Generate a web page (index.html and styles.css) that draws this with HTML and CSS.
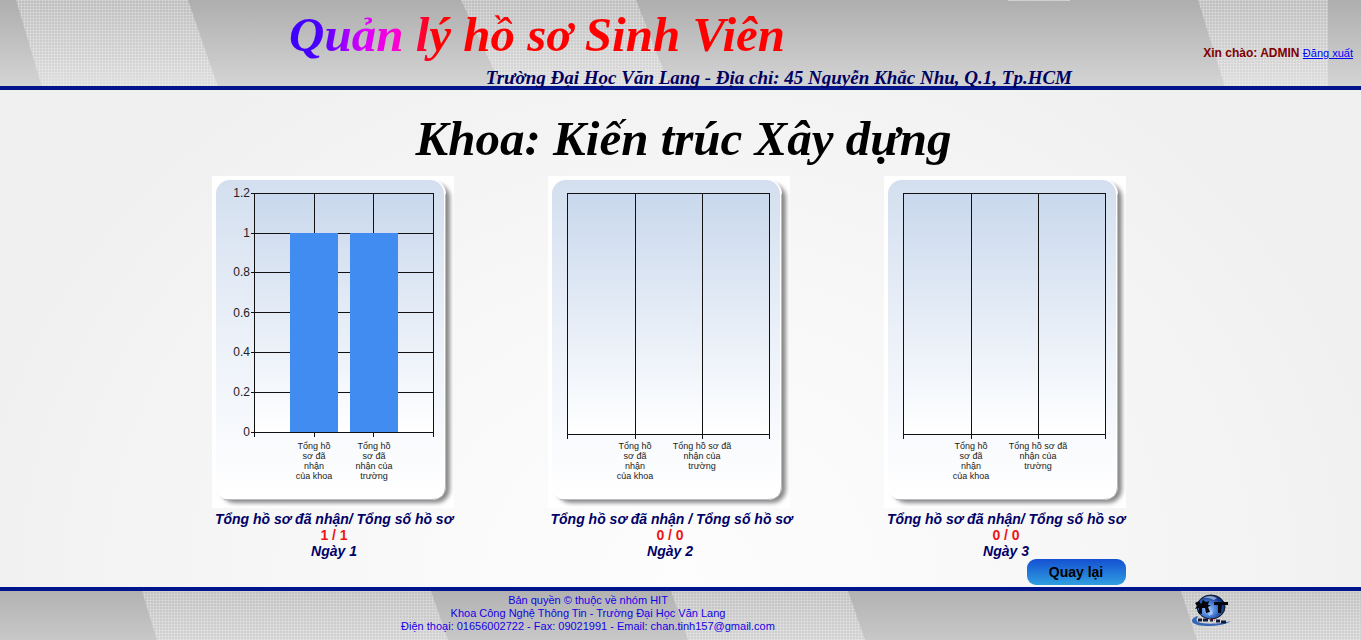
FILE: index.html
```html
<!DOCTYPE html>
<html lang="vi">
<head>
<meta charset="utf-8">
<meta name="viewport" content="width=device-width, initial-scale=1">
<title>Quản lý hồ sơ Sinh Viên</title>
<link rel="stylesheet" href="styles.css">
</head>
<body>
<header class="site-header">
  <svg class="stripes" aria-hidden="true">
    <defs>
      <pattern id="mesh" width="3" height="3" patternUnits="userSpaceOnUse">
        <rect width="3" height="3" fill="#fff" fill-opacity=".2"/>
        <path d="M0 .5H3M.5 0V3" stroke="#fff" stroke-opacity=".22"/>
      </pattern>
    </defs>
    <path fill="url(#mesh)" d="M16 0H188L218 87H42ZM461 0H636L670 87H502ZM1198 0H1328V87H1225ZM1008 0H1070V1H1008Z"/>
  </svg>
  <div class="brand">
    <p class="brand-title">Quản lý hồ sơ Sinh Viên</p>
    <p class="brand-address">Trường Đại Học Văn Lang - Địa chỉ: 45 Nguyễn Khắc Nhu, Q.1, Tp.HCM</p>
  </div>
  <div class="user"><strong>Xin chào: ADMIN</strong> <a href="#">Đăng xuất</a></div>
</header>

<main class="page">
  <h1 class="faculty">Khoa: Kiến trúc Xây dựng</h1>
  <div class="report">
    <div class="charts">
      <figure class="day">
        <svg class="chart" viewBox="0 0 242 332" role="img" aria-label="Ngày 1">
          <defs>
            <linearGradient id="panel" x1="0" y1="0" x2="0" y2="1">
              <stop offset="0" stop-color="#d3dfef"/><stop offset=".5" stop-color="#ecf1f9"/><stop offset="1" stop-color="#fff"/>
            </linearGradient>
            <linearGradient id="plot" x1="0" y1="0" x2="0" y2="1">
              <stop offset="0" stop-color="#c9d8ed"/><stop offset="1" stop-color="#fff"/>
            </linearGradient>
            <filter id="soft" x="-10%" y="-10%" width="120%" height="120%"><feGaussianBlur stdDeviation="2"/></filter>
            <g id="frame">
              <rect width="242" height="332" fill="#fff"/>
              <rect x="9" y="8" width="229" height="319" rx="14" fill="#888" filter="url(#soft)"/>
              <rect x="4" y="4" width="230" height="320" rx="14" fill="#fff"/>
              <path d="M233.500 18V310Q233.500 323.500 220 323.500H12" fill="none" stroke="#b8bcc2"/>
              <rect x="4" y="4" width="228" height="318" rx="14" fill="url(#panel)"/>
            </g>
            <g id="empty-chart">
              <use href="#frame"/>
              <rect x="19" y="17" width="203" height="241" fill="url(#plot)"/>
              <path class="grid" d="M19 17.5H222M19 258.5H222M19.5 17V263M87.5 17V263M154.5 17V263M221.5 17V263"/>
              <g class="category">
                <text x="87" y="273">Tổng hồ</text><text x="87" y="283">sơ đã</text><text x="87" y="293">nhận</text><text x="87" y="303">của khoa</text>
                <text x="154" y="273">Tổng hồ sơ đã</text><text x="154" y="283">nhận của</text><text x="154" y="293">trường</text>
              </g>
            </g>
          </defs>
          <use href="#frame"/>
          <rect x="42" y="17" width="180" height="240" fill="url(#plot)"/>
          <path class="grid" d="M39 17.5H222M39 57.5H222M39 96.5H222M39 136.5H222M39 176.5H222M39 216.5H222M39 256.5H222M42.5 17V261M102.5 17V261M161.5 17V261M221.5 17V261"/>
          <path fill="#418cf0" d="M78 57H126V256H78ZM138 57H186V256H138Z"/>
          <g class="value">
            <text x="38" y="21">1.2</text><text x="38" y="61">1</text><text x="38" y="100">0.8</text><text x="38" y="141">0.6</text><text x="38" y="180">0.4</text><text x="38" y="220">0.2</text><text x="38" y="260">0</text>
          </g>
          <g class="category">
            <text x="102" y="273">Tổng hồ</text><text x="102" y="283">sơ đã</text><text x="102" y="293">nhận</text><text x="102" y="303">của khoa</text>
            <text x="162" y="273">Tổng hồ</text><text x="162" y="283">sơ đã</text><text x="162" y="293">nhận của</text><text x="162" y="303">trường</text>
          </g>
        </svg>
        <figcaption class="caption">Tổng hồ sơ đã nhận/ Tổng số hồ sơ<span class="count">1 / 1</span>Ngày 1</figcaption>
      </figure>
      <figure class="day">
        <svg class="chart" viewBox="0 0 242 332" role="img" aria-label="Ngày 2"><use href="#empty-chart"/></svg>
        <figcaption class="caption">Tổng hồ sơ đã nhận / Tổng số hồ sơ<span class="count">0 / 0</span>Ngày 2</figcaption>
      </figure>
      <figure class="day">
        <svg class="chart" viewBox="0 0 242 332" role="img" aria-label="Ngày 3"><use href="#empty-chart"/></svg>
        <figcaption class="caption">Tổng hồ sơ đã nhận/ Tổng số hồ sơ<span class="count">0 / 0</span>Ngày 3</figcaption>
      </figure>
    </div>
    <button class="back" type="button">Quay lại</button>
  </div>
</main>

<footer class="site-footer">
  <svg class="stripes" aria-hidden="true">
    <path fill="url(#mesh)" d="M142 0H431L448 49H157ZM671 0H848L865 49H688ZM1181 0H1361V49H1197Z"/>
  </svg>
  <p class="contact">Bản quyền © thuộc về nhóm HIT<br>Khoa Công Nghệ Thông Tin - Trường Đại Học Văn Lang<br>Điện thoại: 01656002722 - Fax: 09021991 - Email: chan.tinh157@gmail.com</p>
  <svg class="logo" viewBox="0 0 42 34" role="img" aria-label="HIT">
    <defs>
      <radialGradient id="globe" cx=".4" cy=".6" r=".6">
        <stop offset="0" stop-color="#a9cbfa"/><stop offset=".45" stop-color="#4b82dc"/><stop offset="1" stop-color="#0b2875"/>
      </radialGradient>
    </defs>
    <path d="M7 22C-2 26 1 32 17 32C28 32 37 30 41 27C32 30 10 31 7 27C6 25 7 24 8 23Z" fill="#3767b4"/>
    <ellipse cx="21" cy="13" rx="14" ry="12" fill="url(#globe)" stroke="#101820"/>
    <path d="M13 4Q20 0 27 4L24 6Q18 3 13 4ZM18 18L22 16L23 20L19 22Z" fill="#cfe2ff" opacity=".6"/>
    <path d="M5 9L9 7L11 10L13 6L16 8L19 7L18 11L21 11L18 13L20 18L16 19L15 14L12 14L12 20L8 19L9 14L5 15L7 12ZM24 8H38V11H32L31 19H28V11H24Z" fill="#05070c"/>
    <path d="M8 26H12M13 26H18M20 26H23M26 27H30M31 28H36" stroke="#151b36" stroke-width="3"/>
    <path d="M19 25H21M24 26H25" stroke="#e13b3b" stroke-width="1"/>
  </svg>
</footer>
</body>
</html>
```
FILE: styles.css
```css
* { box-sizing: border-box; }

body {
  display: flex;
  flex-direction: column;
  min-height: 100vh;
  margin: 0;
  font-family: "Liberation Sans", Arial, sans-serif;
  background: radial-gradient(ellipse at 50% 90%, #fdfdfd 0, #f8f8f8 35%, #f0f0f0 75%);
}

p, h1, figure { margin: 0; }

.stripes {
  position: absolute;
  inset: 0;
  z-index: -1;
  width: 100%;
  height: 100%;
}

.site-header {
  position: relative;
  z-index: 0;
  display: grid;
  grid-template-columns: 1fr minmax(0, 783px) 1fr;
  border-bottom: 4px solid #00148c;
  background: linear-gradient(#aeaeae, #d4d4d4);
}

.brand { grid-column: 2; }

.brand-title {
  width: max-content;
  font: italic bold 49px/70px "Liberation Serif", "Times New Roman", serif;
  color: transparent;
  background: linear-gradient(90deg, #3d00ff 0, #4a00ff 6%, #d800ff 15%, #ff00d0 22%, #ff0040 26%, #f00 30%);
  background-clip: text;
  -webkit-background-clip: text;
}

.brand-address {
  text-align: right;
  font: italic bold 19px/16px "Liberation Serif", "Times New Roman", serif;
  white-space: nowrap;
  color: #000060;
}

.user {
  justify-self: end;
  align-self: center;
  padding: 20px 8px 0 0;
  font-size: 12px;
  line-height: 16px;
  white-space: nowrap;
}

.user strong { color: #800000; }
.user a { font-size: 11px; color: #00f; }

.page { flex: 1; }

.faculty {
  padding: 12px 0 0 6px;
  text-align: center;
  font: italic bold 49px/74px "Liberation Serif", "Times New Roman", serif;
  color: #000;
}

.report {
  display: flex;
  flex-direction: column;
  width: fit-content;
  margin: 0 auto;
  padding-right: 24px;
}

.charts { display: flex; gap: 94px; }

.day { width: 242px; }

.chart { display: block; width: 100%; height: auto; }

.grid { fill: none; stroke: #111; }

.value { font-size: 12px; text-anchor: end; fill: #222; }

.category { font-size: 9px; text-anchor: middle; fill: #222; }

.caption {
  padding: 3px 0 0 3px;
  text-align: center;
  font: italic bold 14px/16px "Liberation Sans", Arial, sans-serif;
  white-space: nowrap;
  color: #000066;
}

.count { display: block; font-style: normal; color: #f01414; }

.back {
  align-self: flex-end;
  width: 99px;
  height: 26px;
  margin-bottom: 2px;
  padding: 0;
  border: 0;
  border-radius: 9px;
  font: bold 14px/26px "Liberation Sans", Arial, sans-serif;
  color: #000;
  background: linear-gradient(#1450d2, #2f9fe0);
}

.site-footer {
  position: relative;
  z-index: 0;
  display: grid;
  grid-template-columns: minmax(0, 1176px) 1fr;
  border-top: 4px solid #00148c;
  background: linear-gradient(#b2b2b2, #c8c8c8);
}

.contact {
  padding: 3px 0 7px;
  text-align: center;
  font-size: 11px;
  line-height: 13px;
  color: #1400e6;
}

.logo { width: 42px; height: 34px; margin: 3px 0 0 14px; }
```
